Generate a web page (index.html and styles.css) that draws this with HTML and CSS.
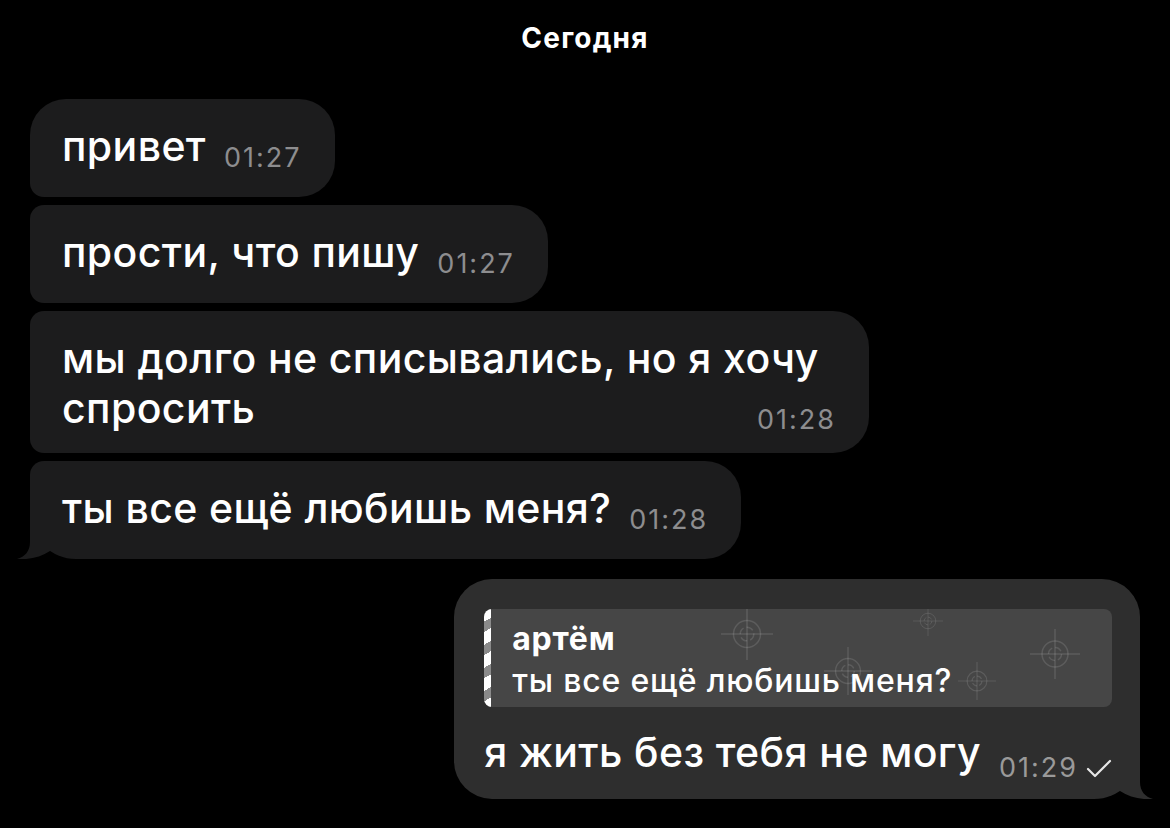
FILE: index.html
```html
<!DOCTYPE html>
<html lang="ru">
<head>
<meta charset="utf-8">
<title>Чат</title>
<link rel="stylesheet" href="styles.css">
</head>
<body>
<svg class="defs" width="0" height="0" aria-hidden="true">
  <defs>
    <symbol id="crosshair" viewBox="-50 -50 100 100">
      <line x1="0" y1="-50" x2="0" y2="50"/>
      <line x1="-50" y1="0" x2="50" y2="0"/>
      <circle cx="0" cy="0" r="26"/>
      <circle cx="0" cy="0" r="13" stroke-dasharray="14 6"/>
    </symbol>
    <symbol id="tail" viewBox="0 0 40 55">
      <path d="M13 0 V38 C13 47 8 53 0 55 C12 56 24 53 33 47 V0 Z"/>
    </symbol>
  </defs>
</svg>

<div class="chat">
  <div class="date">Сегодня</div>

  <div class="messages">
    <div class="bubble in first">
      <span class="text">привет</span><span class="meta">01:27</span>
    </div>
    <div class="bubble in">
      <span class="text">прости, что пишу</span><span class="meta">01:27</span>
    </div>
    <div class="bubble in">
      <span class="text">мы долго не списывались, но я хочу спросить</span><span class="meta">01:28</span>
    </div>
    <div class="bubble in last">
      <span class="text">ты все ещё любишь меня?</span><span class="meta">01:28</span>
      <svg class="tail tail-left"><use href="#tail"/></svg>
    </div>

    <div class="bubble out">
      <div class="reply">
        <svg class="mark m1"><use href="#crosshair"/></svg>
        <svg class="mark m2"><use href="#crosshair"/></svg>
        <svg class="mark m3"><use href="#crosshair"/></svg>
        <svg class="mark m4"><use href="#crosshair"/></svg>
        <svg class="mark m5"><use href="#crosshair"/></svg>
        <div class="reply-name">артём</div>
        <div class="reply-text">ты все ещё любишь меня?</div>
      </div>
      <span class="text">я жить без тебя не могу</span><span class="meta">01:29<svg class="check" viewBox="0 0 26 20"><path d="M2 10 L9 17 L24 2"/></svg></span>
      <svg class="tail tail-right"><use href="#tail"/></svg>
    </div>
  </div>
</div>
</body>
</html>
```

FILE: styles.css
```css
html, body {
  margin: 0;
  background: #000;
}

body {
  font-family: Inter, "Noto Sans", "Liberation Sans", sans-serif;
  color: #fff;
}

.defs {
  position: absolute;
  width: 0;
  height: 0;
}

.chat {
  width: 1170px;
  height: 828px;
  overflow: hidden;
}

/* day separator */
.date {
  text-align: center;
  font-size: 28px;
  font-weight: 700;
  line-height: 36px;
  padding-top: 20px;
  margin-bottom: 43px;
  letter-spacing: 1.2px;
}

.messages {
  display: flex;
  flex-direction: column;
  align-items: flex-start;
  gap: 8px;
  padding: 0 30px;
}

/* message bubbles */
.bubble {
  position: relative;
  box-sizing: border-box;
  max-width: 839px;
  min-height: 98px;
  padding: 22px 33px 20px 32px;
  border-radius: 36px;
  font-size: 41px;
  font-weight: 500;
  letter-spacing: 0.4px;
  line-height: 50px;
  background: #1c1c1d;
}

.bubble.in {
  border-top-left-radius: 14px;
  border-bottom-left-radius: 14px;
}

.bubble.in.first {
  border-top-left-radius: 36px;
}

.bubble.in.last {
  border-bottom-left-radius: 46px;
}

.meta {
  float: right;
  margin: 24px 0 0 18px;
  font-size: 27px;
  font-weight: 400;
  letter-spacing: 2px;
  line-height: 26px;
  color: #8d8d8f;
}

/* bubble tails */
.tail {
  position: absolute;
  bottom: 0;
  width: 40px;
  height: 55px;
  fill: #1c1c1d;
}

.tail-left {
  left: -13px;
}

.tail-right {
  right: -13px;
  transform: scaleX(-1);
  fill: #2e2e2e;
}

/* outgoing message */
.bubble.out {
  align-self: flex-end;
  margin-top: 12px;
  padding: 30px 28px 18px 30px;
  background: #2e2e2e;
  border-radius: 38px;
  border-bottom-right-radius: 46px;
}

.bubble.out .meta {
  margin-top: 28px;
  color: #9a9a9a;
}

.check {
  width: 26px;
  height: 20px;
  margin-left: 8px;
  vertical-align: -2px;
  fill: none;
  stroke: #e6e6e6;
  stroke-width: 2.2;
  stroke-linecap: round;
  stroke-linejoin: round;
}

/* quoted message */
.reply {
  position: relative;
  overflow: hidden;
  margin-bottom: 20px;
  padding: 9px 28px 5px;
  border-radius: 8px;
  background: #464646;
  font-size: 32px;
  letter-spacing: 0.8px;
  line-height: 42px;
}

.reply::before {
  content: "";
  position: absolute;
  left: 0;
  top: 0;
  bottom: 0;
  width: 7px;
  background: repeating-linear-gradient(150deg, #fff 0 11px, #8a8a8a 11px 20px);
}

.reply-name,
.reply-text {
  position: relative;
  z-index: 1;
}

.reply-name {
  font-weight: 700;
}

.mark {
  position: absolute;
  fill: none;
  stroke: rgba(255, 255, 255, 0.12);
  stroke-width: 3;
}

.m1 { left: 237px; top: -1px; width: 52px; height: 52px; }
.m2 { left: 429px; top: -3px; width: 30px; height: 30px; }
.m3 { left: 546px; top: 20px; width: 50px; height: 50px; }
.m4 { left: 340px; top: 38px; width: 48px; height: 48px; }
.m5 { left: 474px; top: 53px; width: 38px; height: 38px; }
```
